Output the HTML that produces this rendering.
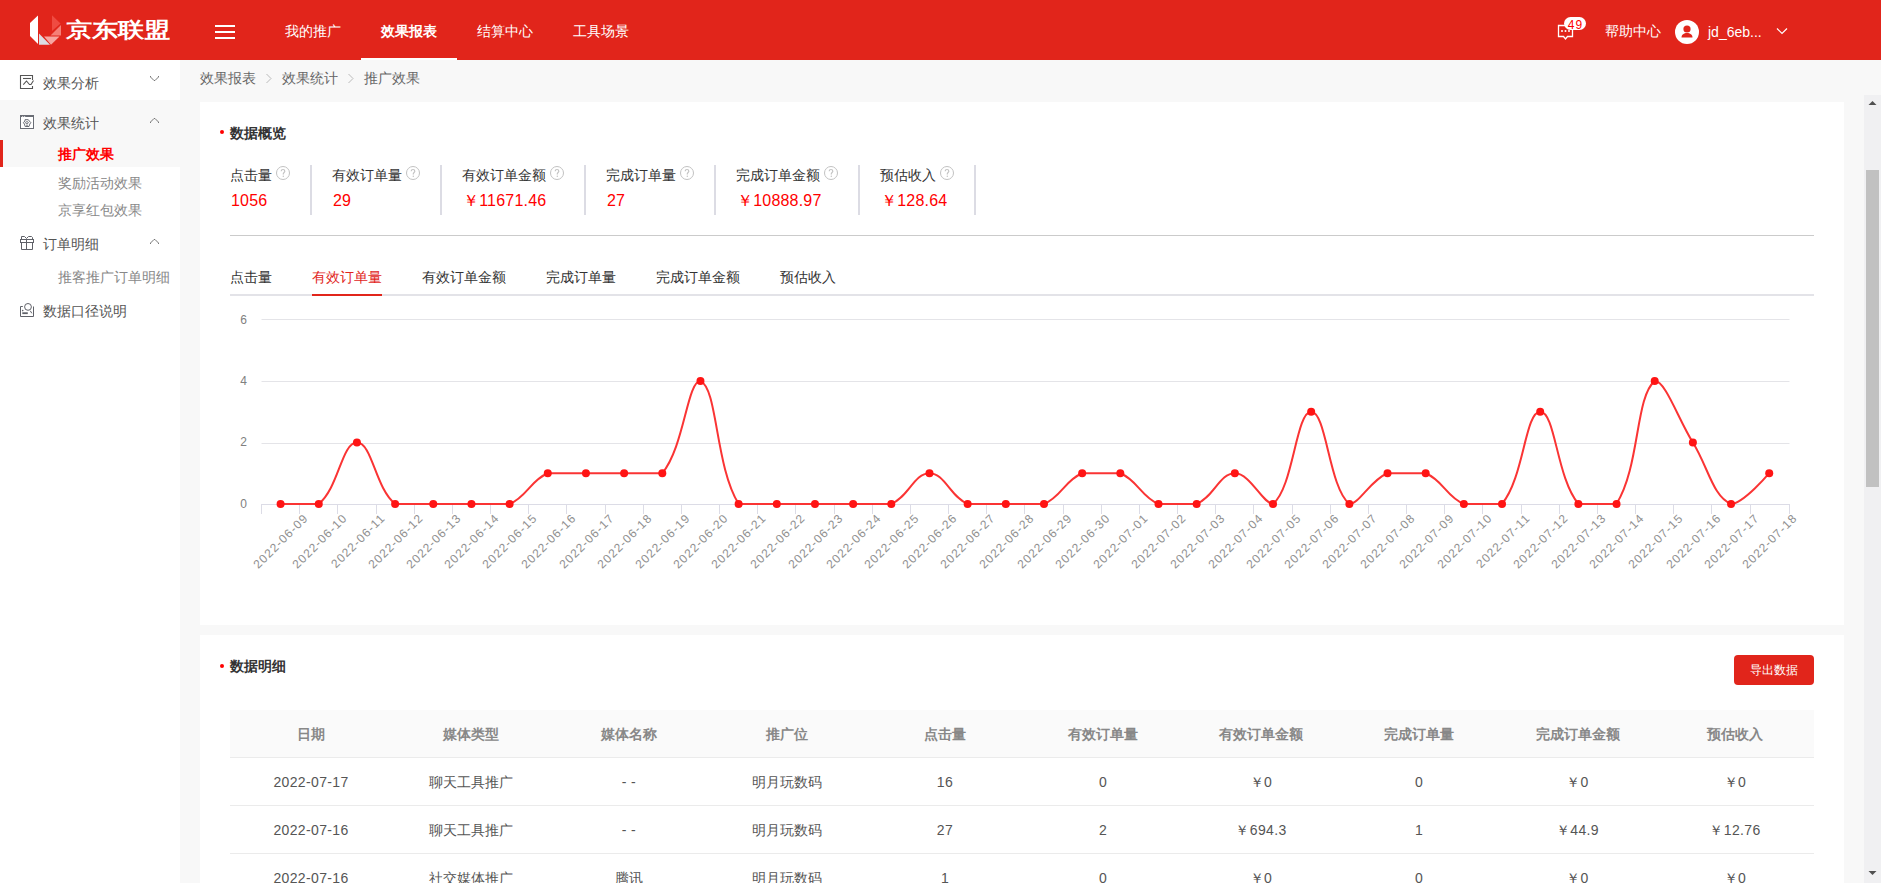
<!DOCTYPE html>
<html><head><meta charset="utf-8">
<style>
*{box-sizing:border-box;margin:0;padding:0}
html,body{width:1881px;height:883px;overflow:hidden;background:#f8f8f8;font-family:"Liberation Sans",sans-serif;font-size:14px;color:#333}
.abs{position:absolute}
#hdr{position:absolute;left:0;top:0;width:1881px;height:60px;background:#e1251b;color:#fff}
.nav{position:absolute;top:20px;height:22px;line-height:22px;font-size:14px;color:#fff;white-space:nowrap}
#side{position:absolute;left:0;top:60px;width:180px;height:823px;background:#fff}
.si{position:absolute;left:43px;height:20px;line-height:20px;font-size:14px;color:#555;white-space:nowrap}
.ss{position:absolute;left:58px;height:20px;line-height:20px;font-size:14px;color:#888;white-space:nowrap}
.chev{position:absolute;left:150px}
.crumb{position:absolute;top:68px;height:20px;line-height:20px;font-size:14px;color:#666;white-space:nowrap}
.card{position:absolute;left:200px;width:1644px;background:#fff}
.ttl{position:absolute;left:230px;height:20px;line-height:20px;font-size:14px;font-weight:bold;color:#333;white-space:nowrap}
.dot{position:absolute;left:220px;width:4px;height:4px;border-radius:2px;background:#f00}
#stats{position:absolute;left:230px;top:165px;height:50px;display:flex}
.stat{padding:0 20px;border-right:2px solid #dcdce4;height:50px}
.stat.first{padding-left:0}
.slab{height:20px;line-height:20px;margin-top:0px;font-size:14px;color:#333;white-space:nowrap}
.q{display:inline-block;width:14px;height:14px;margin-left:4px;vertical-align:0px}
.sval{height:24px;line-height:24px;margin-top:4px;font-size:16px;color:#f00;white-space:nowrap;letter-spacing:0.2px;padding-left:1px}
#hline{position:absolute;left:230px;top:235px;width:1584px;height:1px;background:#cbcbcb}
#tabs{position:absolute;left:230px;top:266px;display:flex}
.tab{padding:0 20px;height:30px;line-height:22px;font-size:14px;color:#333;white-space:nowrap;position:relative}
.tab.first{padding-left:0}
.tab.act{color:#e1251b}
.tab.act:after{content:"";position:absolute;left:20px;right:20px;top:28px;height:2px;background:#e1251b}
#tabline{position:absolute;left:230px;top:294px;width:1584px;height:2px;background:#e3e3e8}
.ylab{position:absolute;left:200px;width:47px;text-align:right;height:16px;line-height:16px;font-size:12px;color:#808080}
.xlab{position:absolute;width:100px;text-align:right;height:14px;line-height:14px;font-size:12px;color:#909090;letter-spacing:1px;transform-origin:100px 7px;transform:rotate(-45deg);white-space:nowrap}
.th{position:absolute;top:722px;width:160px;text-align:center;height:24px;line-height:24px;font-size:14px;font-weight:bold;color:#888;white-space:nowrap}
.td{position:absolute;width:160px;text-align:center;height:24px;line-height:24px;font-size:14px;color:#555;white-space:nowrap}
.td.num{letter-spacing:0.35px}
.rowline{position:absolute;left:230px;width:1584px;height:1px;background:#ebebeb}
#sb{position:absolute;left:1864px;top:95px;width:17px;height:788px;background:#f0f0f2}
#thumb{position:absolute;left:1866px;top:170px;width:13px;height:317px;background:#c1c1c1}
</style></head><body>
<div id="hdr">
  <svg class="abs" style="left:26px;top:12px" width="40" height="36" viewBox="0 0 40 36">
    <polygon points="12,3.5 4,11 4,24 12,32" fill="#fff"/>
    <polygon points="13,21.5 13,32.7 24,32.7" fill="#dcdde3"/>
    <polygon points="18,24.5 33.5,24.5 25,32.7" fill="#f7a5a0"/>
    <polygon points="24.5,23.5 35,13 35,23.5" fill="#f57f77"/>
    <polygon points="26,3.3 34.5,11.5 26,19" fill="#ef4b42"/>
  </svg>
  <div class="abs" style="left:66px;top:14px;height:32px;line-height:32px;font-size:26px;font-weight:bold;color:#fff;letter-spacing:0px;white-space:nowrap;transform:scaleY(0.8);transform-origin:0 16px">京东联盟</div>
  <div class="abs" style="left:215px;top:25px;width:20px;height:2px;background:#fff"></div>
  <div class="abs" style="left:215px;top:31px;width:20px;height:2px;background:#fff"></div>
  <div class="abs" style="left:215px;top:37px;width:20px;height:2px;background:#fff"></div>
  <div class="nav" style="left:285px">我的推广</div>
  <div class="nav" style="left:381px;font-weight:bold">效果报表</div>
  <div class="nav" style="left:477px">结算中心</div>
  <div class="nav" style="left:573px">工具场景</div>
  <div class="abs" style="left:361px;top:58px;width:96px;height:2px;background:#fff"></div>
  <svg class="abs" style="left:1556px;top:22px" width="20" height="20" viewBox="0 0 20 20">
    <path d="M2.5 3.5h14v11h-5l-2 2.5-2-2.5h-5z" fill="none" stroke="#fff" stroke-width="1.3"/>
    <circle cx="6" cy="9" r="1" fill="#fff"/><circle cx="9.5" cy="9" r="1" fill="#fff"/><circle cx="13" cy="9" r="1" fill="#fff"/>
  </svg>
  <div class="abs" style="left:1564px;top:17px;width:22px;height:13px;border-radius:7px;background:#fff;color:#f00;font-size:12px;line-height:16px;text-align:center;overflow:hidden;letter-spacing:1px;text-indent:1px">49</div>
  <div class="nav" style="left:1605px">帮助中心</div>
  <div class="abs" style="left:1675px;top:20px;width:24px;height:24px;border-radius:12px;background:#fff"></div>
  <svg class="abs" style="left:1675px;top:20px" width="24" height="24" viewBox="0 0 24 24">
    <circle cx="12" cy="9" r="3.6" fill="#e1251b"/>
    <path d="M6.5 17.5c0-3 2.5-4.5 5.5-4.5s5.5 1.5 5.5 4.5z" fill="#e1251b"/>
  </svg>
  <div class="nav" style="left:1708px;top:21px;font-size:14px">jd_6eb...</div>
  <svg class="abs" style="left:1776px;top:27px" width="12" height="8" viewBox="0 0 12 8"><path d="M1 1.5l5 5 5-5" fill="none" stroke="#fff" stroke-width="1.2"/></svg>
</div>

<div id="side">
  <div class="abs" style="left:0;top:40px;width:180px;height:67px;background:#f8f8f8"></div>
  <div class="abs" style="left:0;top:80px;width:3px;height:27px;background:#e1251b"></div>
</div>
<svg class="abs" style="left:18px;top:73px" width="18" height="18" viewBox="0 0 18 18">
  <path d="M14.5 7V2.5h-12v13h12V13" fill="none" stroke="#555" stroke-width="1.1"/>
  <path d="M5 5.5h8" stroke="#555" stroke-width="1.1"/>
  <path d="M5.3 11.6L8.5 8l3 3.5h1.5l2.5-4" fill="none" stroke="#555" stroke-width="1.1"/>
</svg>
<div class="si" style="top:73px">效果分析</div>
<svg class="chev" style="top:76px" width="9" height="6" viewBox="0 0 9 6"><path d="M0.5 0v1l3.5 3.5h1l3.5-3.5v-1" fill="none" stroke="#777" stroke-width="1"/></svg>

<svg class="abs" style="left:18px;top:113px" width="18" height="18" viewBox="0 0 18 18">
  <rect x="2.5" y="2.5" width="13" height="13" fill="#fff" stroke="#6a6d75" stroke-width="1"/>
  <rect x="2" y="2" width="14" height="2" fill="#6a6d75"/>
  <circle cx="4.6" cy="3.9" r="0.7" fill="#fff"/><circle cx="6.6" cy="3.9" r="0.7" fill="#fff"/>
  <path d="M7 6.7h3.3l1 1.3 1.5 1.6-1 1.5-.8 2.4H7.2l-.8-2.4-1-1.5 1.5-1.6z" fill="none" stroke="#6a6d75" stroke-width="1"/>
  <ellipse cx="8.9" cy="9.6" rx="1.5" ry="0.9" fill="none" stroke="#6a6d75" stroke-width="0.9"/>
  <path d="M8 12.2h2" stroke="#6a6d75" stroke-width="0.9"/>
</svg>
<div class="si" style="top:113px">效果统计</div>
<svg class="chev" style="top:117px" width="9" height="6" viewBox="0 0 9 6"><path d="M0.5 6v-1l3.5-3.5h1l3.5 3.5v1" fill="none" stroke="#777" stroke-width="1"/></svg>
<div class="ss" style="top:144px;color:#f00;font-weight:bold">推广效果</div>
<div class="ss" style="top:173px">奖励活动效果</div>
<div class="ss" style="top:200px">京享红包效果</div>

<svg class="abs" style="left:18px;top:234px" width="18" height="18" viewBox="0 0 18 18">
  <rect x="2.5" y="5.5" width="13" height="3" fill="none" stroke="#5f6168" stroke-width="1"/>
  <path d="M3.5 8.5v7h11v-7M8.5 5.5v10" fill="none" stroke="#5f6168" stroke-width="1"/>
  <path d="M3.5 5.5v-3h3l2 2M14.5 5.5v-2l-1-1h-3l-2 2" fill="none" stroke="#5f6168" stroke-width="1"/>
</svg>
<div class="si" style="top:234px">订单明细</div>
<svg class="chev" style="top:238px" width="9" height="6" viewBox="0 0 9 6"><path d="M0.5 6v-1l3.5-3.5h1l3.5 3.5v1" fill="none" stroke="#777" stroke-width="1"/></svg>
<div class="ss" style="top:267px">推客推广订单明细</div>

<svg class="abs" style="left:18px;top:301px" width="18" height="18" viewBox="0 0 18 18">
  <path d="M4.8 5.5H2.5v10h13v-10" fill="none" stroke="#5f6168" stroke-width="1"/>
  <circle cx="10" cy="5.9" r="3.4" fill="none" stroke="#5f6168" stroke-width="1"/>
  <path d="M12.3 9.8l1.5 2.5" stroke="#5f6168" stroke-width="1"/>
  <circle cx="4.7" cy="9.6" r="0.8" fill="#5f6168"/>
  <rect x="4.3" y="11.3" width="5.5" height="1.8" fill="#5f6168"/>
</svg>
<div class="si" style="top:301px">数据口径说明</div>

<div class="crumb" style="left:200px">效果报表</div>
<svg class="abs" style="left:265px;top:73px" width="8" height="11" viewBox="0 0 8 11"><path d="M1.5 1l4.5 4.5-4.5 4.5" fill="none" stroke="#bbb" stroke-width="1"/></svg>
<div class="crumb" style="left:282px">效果统计</div>
<svg class="abs" style="left:347px;top:73px" width="8" height="11" viewBox="0 0 8 11"><path d="M1.5 1l4.5 4.5-4.5 4.5" fill="none" stroke="#bbb" stroke-width="1"/></svg>
<div class="crumb" style="left:364px">推广效果</div>

<div class="card" style="top:102px;height:523px"></div>
<div class="card" style="top:635px;height:260px"></div>

<div class="dot" style="top:130px"></div>
<div class="ttl" style="top:123px">数据概览</div>
<div id="stats"><div class="stat first"><div class="slab">点击量<svg class="q" width="14" height="14" viewBox="0 0 14 14"><circle cx="7" cy="7" r="6.5" fill="none" stroke="#c2c2c2" stroke-width="1"/><path d="M5.2 5.3c0-1.1.8-1.8 1.8-1.8s1.8.7 1.8 1.7c0 1.2-1.5 1.3-1.5 2.6v.6" fill="none" stroke="#c4c4c4" stroke-width="1.2"/><circle cx="7.3" cy="10.2" r=".75" fill="#c4c4c4"/></svg></div><div class="sval">1056</div></div><div class="stat"><div class="slab">有效订单量<svg class="q" width="14" height="14" viewBox="0 0 14 14"><circle cx="7" cy="7" r="6.5" fill="none" stroke="#c2c2c2" stroke-width="1"/><path d="M5.2 5.3c0-1.1.8-1.8 1.8-1.8s1.8.7 1.8 1.7c0 1.2-1.5 1.3-1.5 2.6v.6" fill="none" stroke="#c4c4c4" stroke-width="1.2"/><circle cx="7.3" cy="10.2" r=".75" fill="#c4c4c4"/></svg></div><div class="sval">29</div></div><div class="stat"><div class="slab">有效订单金额<svg class="q" width="14" height="14" viewBox="0 0 14 14"><circle cx="7" cy="7" r="6.5" fill="none" stroke="#c2c2c2" stroke-width="1"/><path d="M5.2 5.3c0-1.1.8-1.8 1.8-1.8s1.8.7 1.8 1.7c0 1.2-1.5 1.3-1.5 2.6v.6" fill="none" stroke="#c4c4c4" stroke-width="1.2"/><circle cx="7.3" cy="10.2" r=".75" fill="#c4c4c4"/></svg></div><div class="sval">￥11671.46</div></div><div class="stat"><div class="slab">完成订单量<svg class="q" width="14" height="14" viewBox="0 0 14 14"><circle cx="7" cy="7" r="6.5" fill="none" stroke="#c2c2c2" stroke-width="1"/><path d="M5.2 5.3c0-1.1.8-1.8 1.8-1.8s1.8.7 1.8 1.7c0 1.2-1.5 1.3-1.5 2.6v.6" fill="none" stroke="#c4c4c4" stroke-width="1.2"/><circle cx="7.3" cy="10.2" r=".75" fill="#c4c4c4"/></svg></div><div class="sval">27</div></div><div class="stat"><div class="slab">完成订单金额<svg class="q" width="14" height="14" viewBox="0 0 14 14"><circle cx="7" cy="7" r="6.5" fill="none" stroke="#c2c2c2" stroke-width="1"/><path d="M5.2 5.3c0-1.1.8-1.8 1.8-1.8s1.8.7 1.8 1.7c0 1.2-1.5 1.3-1.5 2.6v.6" fill="none" stroke="#c4c4c4" stroke-width="1.2"/><circle cx="7.3" cy="10.2" r=".75" fill="#c4c4c4"/></svg></div><div class="sval">￥10888.97</div></div><div class="stat"><div class="slab">预估收入<svg class="q" width="14" height="14" viewBox="0 0 14 14"><circle cx="7" cy="7" r="6.5" fill="none" stroke="#c2c2c2" stroke-width="1"/><path d="M5.2 5.3c0-1.1.8-1.8 1.8-1.8s1.8.7 1.8 1.7c0 1.2-1.5 1.3-1.5 2.6v.6" fill="none" stroke="#c4c4c4" stroke-width="1.2"/><circle cx="7.3" cy="10.2" r=".75" fill="#c4c4c4"/></svg></div><div class="sval">￥128.64</div></div></div>
<div id="hline"></div>
<div id="tabline"></div>
<div id="tabs"><div class="tab first">点击量</div><div class="tab act">有效订单量</div><div class="tab">有效订单金额</div><div class="tab">完成订单量</div><div class="tab">完成订单金额</div><div class="tab">预估收入</div></div>
<svg width="1881" height="883" style="position:absolute;left:0;top:0">
<line x1="261.5" y1="443.5" x2="1789.5" y2="443.5" stroke="#e4e4e8" stroke-width="1"/>
<line x1="261.5" y1="381.5" x2="1789.5" y2="381.5" stroke="#e4e4e8" stroke-width="1"/>
<line x1="261.5" y1="319.5" x2="1789.5" y2="319.5" stroke="#e4e4e8" stroke-width="1"/>
<line x1="261.0" y1="504.5" x2="1790.0" y2="504.5" stroke="#dcdce6" stroke-width="1"/>
<line x1="261.5" y1="505.0" x2="261.5" y2="514.0" stroke="#dcdce6" stroke-width="1"/>
<line x1="299.5" y1="505.0" x2="299.5" y2="514.0" stroke="#dcdce6" stroke-width="1"/>
<line x1="337.5" y1="505.0" x2="337.5" y2="514.0" stroke="#dcdce6" stroke-width="1"/>
<line x1="376.5" y1="505.0" x2="376.5" y2="514.0" stroke="#dcdce6" stroke-width="1"/>
<line x1="414.5" y1="505.0" x2="414.5" y2="514.0" stroke="#dcdce6" stroke-width="1"/>
<line x1="452.5" y1="505.0" x2="452.5" y2="514.0" stroke="#dcdce6" stroke-width="1"/>
<line x1="490.5" y1="505.0" x2="490.5" y2="514.0" stroke="#dcdce6" stroke-width="1"/>
<line x1="528.5" y1="505.0" x2="528.5" y2="514.0" stroke="#dcdce6" stroke-width="1"/>
<line x1="566.5" y1="505.0" x2="566.5" y2="514.0" stroke="#dcdce6" stroke-width="1"/>
<line x1="605.5" y1="505.0" x2="605.5" y2="514.0" stroke="#dcdce6" stroke-width="1"/>
<line x1="643.5" y1="505.0" x2="643.5" y2="514.0" stroke="#dcdce6" stroke-width="1"/>
<line x1="681.5" y1="505.0" x2="681.5" y2="514.0" stroke="#dcdce6" stroke-width="1"/>
<line x1="719.5" y1="505.0" x2="719.5" y2="514.0" stroke="#dcdce6" stroke-width="1"/>
<line x1="757.5" y1="505.0" x2="757.5" y2="514.0" stroke="#dcdce6" stroke-width="1"/>
<line x1="795.5" y1="505.0" x2="795.5" y2="514.0" stroke="#dcdce6" stroke-width="1"/>
<line x1="834.5" y1="505.0" x2="834.5" y2="514.0" stroke="#dcdce6" stroke-width="1"/>
<line x1="872.5" y1="505.0" x2="872.5" y2="514.0" stroke="#dcdce6" stroke-width="1"/>
<line x1="910.5" y1="505.0" x2="910.5" y2="514.0" stroke="#dcdce6" stroke-width="1"/>
<line x1="948.5" y1="505.0" x2="948.5" y2="514.0" stroke="#dcdce6" stroke-width="1"/>
<line x1="986.5" y1="505.0" x2="986.5" y2="514.0" stroke="#dcdce6" stroke-width="1"/>
<line x1="1024.5" y1="505.0" x2="1024.5" y2="514.0" stroke="#dcdce6" stroke-width="1"/>
<line x1="1063.5" y1="505.0" x2="1063.5" y2="514.0" stroke="#dcdce6" stroke-width="1"/>
<line x1="1101.5" y1="505.0" x2="1101.5" y2="514.0" stroke="#dcdce6" stroke-width="1"/>
<line x1="1139.5" y1="505.0" x2="1139.5" y2="514.0" stroke="#dcdce6" stroke-width="1"/>
<line x1="1177.5" y1="505.0" x2="1177.5" y2="514.0" stroke="#dcdce6" stroke-width="1"/>
<line x1="1215.5" y1="505.0" x2="1215.5" y2="514.0" stroke="#dcdce6" stroke-width="1"/>
<line x1="1253.5" y1="505.0" x2="1253.5" y2="514.0" stroke="#dcdce6" stroke-width="1"/>
<line x1="1292.5" y1="505.0" x2="1292.5" y2="514.0" stroke="#dcdce6" stroke-width="1"/>
<line x1="1330.5" y1="505.0" x2="1330.5" y2="514.0" stroke="#dcdce6" stroke-width="1"/>
<line x1="1368.5" y1="505.0" x2="1368.5" y2="514.0" stroke="#dcdce6" stroke-width="1"/>
<line x1="1406.5" y1="505.0" x2="1406.5" y2="514.0" stroke="#dcdce6" stroke-width="1"/>
<line x1="1444.5" y1="505.0" x2="1444.5" y2="514.0" stroke="#dcdce6" stroke-width="1"/>
<line x1="1482.5" y1="505.0" x2="1482.5" y2="514.0" stroke="#dcdce6" stroke-width="1"/>
<line x1="1521.5" y1="505.0" x2="1521.5" y2="514.0" stroke="#dcdce6" stroke-width="1"/>
<line x1="1559.5" y1="505.0" x2="1559.5" y2="514.0" stroke="#dcdce6" stroke-width="1"/>
<line x1="1597.5" y1="505.0" x2="1597.5" y2="514.0" stroke="#dcdce6" stroke-width="1"/>
<line x1="1635.5" y1="505.0" x2="1635.5" y2="514.0" stroke="#dcdce6" stroke-width="1"/>
<line x1="1673.5" y1="505.0" x2="1673.5" y2="514.0" stroke="#dcdce6" stroke-width="1"/>
<line x1="1711.5" y1="505.0" x2="1711.5" y2="514.0" stroke="#dcdce6" stroke-width="1"/>
<line x1="1750.5" y1="505.0" x2="1750.5" y2="514.0" stroke="#dcdce6" stroke-width="1"/>
<line x1="1789.5" y1="505.0" x2="1789.5" y2="514.0" stroke="#dcdce6" stroke-width="1"/>
<path d="M280.58 503.90 C280.58 503.90 308.20 503.90 318.75 503.90 C338.74 487.83 341.66 442.50 356.93 442.50 C372.19 442.50 375.11 487.83 395.10 503.90 C405.65 503.90 418.00 503.90 433.26 503.90 C448.53 503.90 456.17 503.90 471.44 503.90 C486.70 503.90 496.23 503.90 509.61 503.90 C526.77 497.00 530.61 480.10 547.78 473.20 C561.15 473.20 570.68 473.20 585.94 473.20 C601.21 473.20 608.85 473.20 624.12 473.20 C639.38 473.20 653.83 473.20 662.29 473.20 C684.37 446.56 687.12 381.10 700.46 381.10 C717.66 388.02 715.08 466.02 738.62 503.90 C745.61 503.90 761.53 503.90 776.80 503.90 C792.06 503.90 799.70 503.90 814.97 503.90 C830.23 503.90 837.87 503.90 853.13 503.90 C868.40 503.90 877.93 503.90 891.31 503.90 C908.47 497.00 914.21 473.20 929.48 473.20 C944.74 473.20 950.48 497.00 967.64 503.90 C981.02 503.90 990.55 503.90 1005.82 503.90 C1021.08 503.90 1030.61 503.90 1043.99 503.90 C1061.15 497.00 1064.99 480.10 1082.16 473.20 C1095.53 473.20 1106.95 473.20 1120.33 473.20 C1137.49 480.10 1141.33 497.00 1158.49 503.90 C1171.87 503.90 1183.29 503.90 1196.66 503.90 C1213.83 497.00 1219.57 473.20 1234.84 473.20 C1250.10 473.20 1262.94 503.90 1273.01 503.90 C1293.48 487.43 1295.91 411.80 1311.17 411.80 C1326.44 411.80 1328.87 487.43 1349.35 503.90 C1359.41 503.90 1370.35 480.10 1387.52 473.20 C1400.89 473.20 1412.31 473.20 1425.68 473.20 C1442.85 480.10 1446.69 497.00 1463.86 503.90 C1477.23 503.90 1493.57 503.90 1502.03 503.90 C1524.11 477.26 1524.93 411.80 1540.20 411.80 C1555.46 411.80 1556.28 477.26 1578.37 503.90 C1586.82 503.90 1609.55 503.90 1616.54 503.90 C1640.08 466.02 1635.16 396.82 1654.71 381.10 C1665.69 381.10 1677.61 417.94 1692.88 442.50 C1708.14 467.06 1712.84 496.58 1731.05 503.90 C1743.38 503.90 1769.22 473.20 1769.22 473.20" fill="none" stroke="#fa3434" stroke-width="2"/>
<circle cx="280.58" cy="503.90" r="4" fill="#ff1414"/>
<circle cx="318.75" cy="503.90" r="4" fill="#ff1414"/>
<circle cx="356.93" cy="442.50" r="4" fill="#ff1414"/>
<circle cx="395.10" cy="503.90" r="4" fill="#ff1414"/>
<circle cx="433.26" cy="503.90" r="4" fill="#ff1414"/>
<circle cx="471.44" cy="503.90" r="4" fill="#ff1414"/>
<circle cx="509.61" cy="503.90" r="4" fill="#ff1414"/>
<circle cx="547.78" cy="473.20" r="4" fill="#ff1414"/>
<circle cx="585.94" cy="473.20" r="4" fill="#ff1414"/>
<circle cx="624.12" cy="473.20" r="4" fill="#ff1414"/>
<circle cx="662.29" cy="473.20" r="4" fill="#ff1414"/>
<circle cx="700.46" cy="381.10" r="4" fill="#ff1414"/>
<circle cx="738.62" cy="503.90" r="4" fill="#ff1414"/>
<circle cx="776.80" cy="503.90" r="4" fill="#ff1414"/>
<circle cx="814.97" cy="503.90" r="4" fill="#ff1414"/>
<circle cx="853.13" cy="503.90" r="4" fill="#ff1414"/>
<circle cx="891.31" cy="503.90" r="4" fill="#ff1414"/>
<circle cx="929.48" cy="473.20" r="4" fill="#ff1414"/>
<circle cx="967.64" cy="503.90" r="4" fill="#ff1414"/>
<circle cx="1005.82" cy="503.90" r="4" fill="#ff1414"/>
<circle cx="1043.99" cy="503.90" r="4" fill="#ff1414"/>
<circle cx="1082.16" cy="473.20" r="4" fill="#ff1414"/>
<circle cx="1120.33" cy="473.20" r="4" fill="#ff1414"/>
<circle cx="1158.49" cy="503.90" r="4" fill="#ff1414"/>
<circle cx="1196.66" cy="503.90" r="4" fill="#ff1414"/>
<circle cx="1234.84" cy="473.20" r="4" fill="#ff1414"/>
<circle cx="1273.01" cy="503.90" r="4" fill="#ff1414"/>
<circle cx="1311.17" cy="411.80" r="4" fill="#ff1414"/>
<circle cx="1349.35" cy="503.90" r="4" fill="#ff1414"/>
<circle cx="1387.52" cy="473.20" r="4" fill="#ff1414"/>
<circle cx="1425.68" cy="473.20" r="4" fill="#ff1414"/>
<circle cx="1463.86" cy="503.90" r="4" fill="#ff1414"/>
<circle cx="1502.03" cy="503.90" r="4" fill="#ff1414"/>
<circle cx="1540.20" cy="411.80" r="4" fill="#ff1414"/>
<circle cx="1578.37" cy="503.90" r="4" fill="#ff1414"/>
<circle cx="1616.54" cy="503.90" r="4" fill="#ff1414"/>
<circle cx="1654.71" cy="381.10" r="4" fill="#ff1414"/>
<circle cx="1692.88" cy="442.50" r="4" fill="#ff1414"/>
<circle cx="1731.05" cy="503.90" r="4" fill="#ff1414"/>
<circle cx="1769.22" cy="473.20" r="4" fill="#ff1414"/>
</svg>
<div class="ylab" style="top:496px">0</div><div class="ylab" style="top:434px">2</div><div class="ylab" style="top:373px">4</div><div class="ylab" style="top:312px">6</div>
<div class="xlab" style="left:206.4px;top:509px">2022-06-09</div><div class="xlab" style="left:244.5px;top:509px">2022-06-10</div><div class="xlab" style="left:282.7px;top:509px">2022-06-11</div><div class="xlab" style="left:320.9px;top:509px">2022-06-12</div><div class="xlab" style="left:359.1px;top:509px">2022-06-13</div><div class="xlab" style="left:397.2px;top:509px">2022-06-14</div><div class="xlab" style="left:435.4px;top:509px">2022-06-15</div><div class="xlab" style="left:473.6px;top:509px">2022-06-16</div><div class="xlab" style="left:511.7px;top:509px">2022-06-17</div><div class="xlab" style="left:549.9px;top:509px">2022-06-18</div><div class="xlab" style="left:588.1px;top:509px">2022-06-19</div><div class="xlab" style="left:626.2px;top:509px">2022-06-20</div><div class="xlab" style="left:664.4px;top:509px">2022-06-21</div><div class="xlab" style="left:702.6px;top:509px">2022-06-22</div><div class="xlab" style="left:740.8px;top:509px">2022-06-23</div><div class="xlab" style="left:778.9px;top:509px">2022-06-24</div><div class="xlab" style="left:817.1px;top:509px">2022-06-25</div><div class="xlab" style="left:855.3px;top:509px">2022-06-26</div><div class="xlab" style="left:893.4px;top:509px">2022-06-27</div><div class="xlab" style="left:931.6px;top:509px">2022-06-28</div><div class="xlab" style="left:969.8px;top:509px">2022-06-29</div><div class="xlab" style="left:1007.9px;top:509px">2022-06-30</div><div class="xlab" style="left:1046.1px;top:509px">2022-07-01</div><div class="xlab" style="left:1084.3px;top:509px">2022-07-02</div><div class="xlab" style="left:1122.5px;top:509px">2022-07-03</div><div class="xlab" style="left:1160.6px;top:509px">2022-07-04</div><div class="xlab" style="left:1198.8px;top:509px">2022-07-05</div><div class="xlab" style="left:1237.0px;top:509px">2022-07-06</div><div class="xlab" style="left:1275.1px;top:509px">2022-07-07</div><div class="xlab" style="left:1313.3px;top:509px">2022-07-08</div><div class="xlab" style="left:1351.5px;top:509px">2022-07-09</div><div class="xlab" style="left:1389.6px;top:509px">2022-07-10</div><div class="xlab" style="left:1427.8px;top:509px">2022-07-11</div><div class="xlab" style="left:1466.0px;top:509px">2022-07-12</div><div class="xlab" style="left:1504.2px;top:509px">2022-07-13</div><div class="xlab" style="left:1542.3px;top:509px">2022-07-14</div><div class="xlab" style="left:1580.5px;top:509px">2022-07-15</div><div class="xlab" style="left:1618.7px;top:509px">2022-07-16</div><div class="xlab" style="left:1656.8px;top:509px">2022-07-17</div><div class="xlab" style="left:1695.0px;top:509px">2022-07-18</div>

<div class="dot" style="top:664px"></div>
<div class="ttl" style="top:656px">数据明细</div>
<div class="abs" style="left:1734px;top:655px;width:80px;height:30px;border-radius:4px;background:#e1251b;color:#fff;font-size:12px;line-height:30px;text-align:center">导出数据</div>
<div class="abs" style="left:230px;top:710px;width:1584px;height:48px;background:#fafafa;border-bottom:1px solid #ebebeb"></div>
<div class="th" style="left:231.0px">日期</div><div class="th" style="left:391.0px">媒体类型</div><div class="th" style="left:549.0px">媒体名称</div><div class="th" style="left:707.0px">推广位</div><div class="th" style="left:865.0px">点击量</div><div class="th" style="left:1023.0px">有效订单量</div><div class="th" style="left:1181.0px">有效订单金额</div><div class="th" style="left:1339.0px">完成订单量</div><div class="th" style="left:1497.5px">完成订单金额</div><div class="th" style="left:1655.0px">预估收入</div>
<div class="td num" style="left:231.0px;top:770px">2022-07-17</div><div class="td" style="left:391.0px;top:770px">聊天工具推广</div><div class="td num" style="left:549.0px;top:770px">- -</div><div class="td" style="left:707.0px;top:770px">明月玩数码</div><div class="td num" style="left:865.0px;top:770px">16</div><div class="td num" style="left:1023.0px;top:770px">0</div><div class="td num" style="left:1181.0px;top:770px">￥0</div><div class="td num" style="left:1339.0px;top:770px">0</div><div class="td num" style="left:1497.5px;top:770px">￥0</div><div class="td num" style="left:1655.0px;top:770px">￥0</div><div class="rowline" style="top:805px"></div><div class="td num" style="left:231.0px;top:818px">2022-07-16</div><div class="td" style="left:391.0px;top:818px">聊天工具推广</div><div class="td num" style="left:549.0px;top:818px">- -</div><div class="td" style="left:707.0px;top:818px">明月玩数码</div><div class="td num" style="left:865.0px;top:818px">27</div><div class="td num" style="left:1023.0px;top:818px">2</div><div class="td num" style="left:1181.0px;top:818px">￥694.3</div><div class="td num" style="left:1339.0px;top:818px">1</div><div class="td num" style="left:1497.5px;top:818px">￥44.9</div><div class="td num" style="left:1655.0px;top:818px">￥12.76</div><div class="rowline" style="top:853px"></div><div class="td num" style="left:231.0px;top:866px">2022-07-16</div><div class="td" style="left:391.0px;top:866px">社交媒体推广</div><div class="td" style="left:549.0px;top:866px">腾讯</div><div class="td" style="left:707.0px;top:866px">明月玩数码</div><div class="td num" style="left:865.0px;top:866px">1</div><div class="td num" style="left:1023.0px;top:866px">0</div><div class="td num" style="left:1181.0px;top:866px">￥0</div><div class="td num" style="left:1339.0px;top:866px">0</div><div class="td num" style="left:1497.5px;top:866px">￥0</div><div class="td num" style="left:1655.0px;top:866px">￥0</div>

<div id="sb"></div>
<div id="thumb"></div>
<svg class="abs" style="left:1864px;top:96px" width="17" height="14" viewBox="0 0 17 14"><path d="M4.5 9h8l-4-4z" fill="#505050"/></svg>
<svg class="abs" style="left:1864px;top:866px" width="17" height="14" viewBox="0 0 17 14"><path d="M4.5 5h8l-4 4z" fill="#505050"/></svg>
</body></html>
